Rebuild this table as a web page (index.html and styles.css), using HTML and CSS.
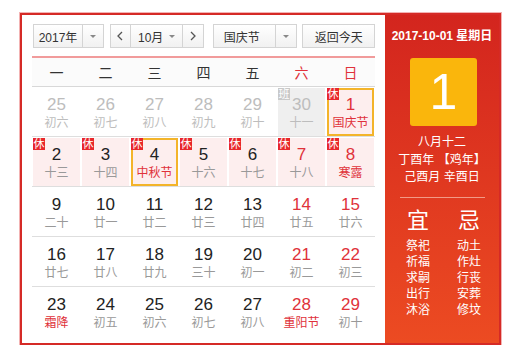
FILE: index.html
```html
<!DOCTYPE html>
<html lang="zh-CN">
<head>
<meta charset="utf-8">
<title>万年历</title>
<link rel="stylesheet" href="styles.css">
</head>
<body>
<div class="cal">
  <div class="main">
    <div class="controls">
      <div class="sel year"><span class="val">2017年</span><span class="arr"><i class="tri"></i></span></div>
      <div class="sel month">
        <span class="nav"><svg width="8" height="10" viewBox="0 0 8 10"><path d="M6 1 L2 5 L6 9" fill="none" stroke="#555" stroke-width="1.3"/></svg></span>
        <span class="val mval">10月<i class="tri"></i></span>
        <span class="nav"><svg width="8" height="10" viewBox="0 0 8 10"><path d="M2 1 L6 5 L2 9" fill="none" stroke="#555" stroke-width="1.3"/></svg></span>
      </div>
      <div class="sel hol"><span class="val">国庆节</span><span class="arr"><i class="tri"></i></span></div>
      <div class="btn">返回今天</div>
    </div>
    <div class="week">
      <span>一</span><span>二</span><span>三</span><span>四</span><span>五</span><span class="red">六</span><span class="red">日</span>
    </div>
    <div class="row">
      <div class="cell other"><b>25</b><em>初六</em></div>
      <div class="cell other"><b>26</b><em>初七</em></div>
      <div class="cell other"><b>27</b><em>初八</em></div>
      <div class="cell other"><b>28</b><em>初九</em></div>
      <div class="cell other"><b>29</b><em>初十</em></div>
      <div class="cell other work"><i class="badge gray">班</i><b>30</b><em>十一</em></div>
      <div class="cell rest sel-cell"><i class="badge">休</i><b class="red">1</b><em class="red">国庆节</em></div>
    </div>
    <div class="row">
      <div class="cell rest"><i class="badge">休</i><b>2</b><em>十三</em></div>
      <div class="cell rest"><i class="badge">休</i><b>3</b><em>十四</em></div>
      <div class="cell rest today"><i class="badge">休</i><b>4</b><em class="red">中秋节</em></div>
      <div class="cell rest"><i class="badge">休</i><b>5</b><em>十六</em></div>
      <div class="cell rest"><i class="badge">休</i><b>6</b><em>十七</em></div>
      <div class="cell rest"><i class="badge">休</i><b class="red">7</b><em>十八</em></div>
      <div class="cell rest"><i class="badge">休</i><b class="red">8</b><em class="red">寒露</em></div>
    </div>
    <div class="row">
      <div class="cell"><b>9</b><em>二十</em></div>
      <div class="cell"><b>10</b><em>廿一</em></div>
      <div class="cell"><b>11</b><em>廿二</em></div>
      <div class="cell"><b>12</b><em>廿三</em></div>
      <div class="cell"><b>13</b><em>廿四</em></div>
      <div class="cell"><b class="red">14</b><em>廿五</em></div>
      <div class="cell"><b class="red">15</b><em>廿六</em></div>
    </div>
    <div class="row">
      <div class="cell"><b>16</b><em>廿七</em></div>
      <div class="cell"><b>17</b><em>廿八</em></div>
      <div class="cell"><b>18</b><em>廿九</em></div>
      <div class="cell"><b>19</b><em>三十</em></div>
      <div class="cell"><b>20</b><em>初一</em></div>
      <div class="cell"><b class="red">21</b><em>初二</em></div>
      <div class="cell"><b class="red">22</b><em>初三</em></div>
    </div>
    <div class="row last">
      <div class="cell"><b>23</b><em class="red">霜降</em></div>
      <div class="cell"><b>24</b><em>初五</em></div>
      <div class="cell"><b>25</b><em>初六</em></div>
      <div class="cell"><b>26</b><em>初七</em></div>
      <div class="cell"><b>27</b><em>初八</em></div>
      <div class="cell"><b class="red">28</b><em class="red">重阳节</em></div>
      <div class="cell"><b class="red">29</b><em>初十</em></div>
    </div>
  </div>
  <div class="side">
    <div class="date">2017-10-01 星期日</div>
    <div class="big">1</div>
    <div class="lunar">
      <div>八月十二</div>
      <div>丁酉年 【鸡年】</div>
      <div>己酉月 辛酉日</div>
    </div>
    <div class="divider"></div>
    <div class="yiji">
      <div class="col">
        <div class="hd">宜</div>
        <div>祭祀</div><div>祈福</div><div>求嗣</div><div>出行</div><div>沐浴</div>
      </div>
      <div class="col">
        <div class="hd">忌</div>
        <div>动土</div><div>作灶</div><div>行丧</div><div>安葬</div><div>修坟</div>
      </div>
    </div>
  </div>
</div>
</body>
</html>
```
FILE: styles.css
```css
html, body {
  margin: 0;
  padding: 0;
  background: #fff;
}
body {
  padding: 13px 0 0 20px;
  font-family: "Liberation Sans", "Noto Sans CJK SC", sans-serif;
  color: #333;
}
.cal {
  display: flex;
  width: 477px;
  height: 328px;
  border: 2px solid #d52a26;
  box-shadow: 0 0 0 1px #f3b3b3;
}
.main {
  width: 343px;
  padding: 9px 10px 0 10px;
}
.controls {
  display: flex;
  height: 24px;
  padding-left: 1px;
  font-size: 12px;
}
.sel, .btn {
  display: flex;
  height: 22px;
  border: 1px solid #d4d4d4;
  background: linear-gradient(#fff, #f1f1f1);
  align-items: center;
}
.year { width: 69px; margin-right: 6px; }
.year .val { width: 48px; }
.month { width: 92px; margin-right: 9px; }
.hol { width: 83px; margin-right: 5px; }
.hol .val { width: 62px; justify-content: flex-start; padding-left: 10px; box-sizing: border-box; }
.val {
  display: flex;
  height: 100%;
  align-items: center;
  justify-content: center;
  border-right: 1px solid #d4d4d4;
}
.arr {
  flex: 1;
  display: flex;
  justify-content: center;
  align-items: center;
}
.tri {
  display: inline-block;
  width: 0;
  height: 0;
  border-left: 3px solid transparent;
  border-right: 3px solid transparent;
  border-top: 3px solid #888;
}
.nav {
  width: 20px;
  height: 100%;
  display: flex;
  align-items: center;
  justify-content: center;
}
.mval {
  width: 52px;
  border-left: 1px solid #d4d4d4;
  gap: 6px;
}
.btn {
  width: 71px;
  justify-content: center;
  font-size: 12px;
}
.week {
  display: grid;
  grid-template-columns: repeat(7, 49px);
  height: 28px;
  margin-top: 8px;
  border-top: 2px solid #f19b9b;
  border-bottom: 1px solid #d8d8d8;
  background: #fbfbfb;
  font-size: 14px;
  align-items: center;
  justify-items: center;
}
.red { color: #e0323a !important; }
.row {
  display: grid;
  grid-template-columns: repeat(7, 49px);
  height: 48px;
  border-bottom: 1px solid #dedede;
  padding-top: 1px;
}
.row.last { border-bottom: none; }
.cell {
  position: relative;
  margin: 0 1px;
  display: flex;
  flex-direction: column;
  align-items: center;
  box-sizing: border-box;
  padding-top: 7px;
}
.cell b {
  font-weight: normal;
  font-size: 17px;
  line-height: 20px;
  color: #222;
}
.cell em {
  font-style: normal;
  font-size: 12px;
  line-height: 16px;
  color: #999;
}
.cell.other b, .cell.other em { color: #bdbdbd; }
.cell.work { background: #efefef; }
.cell.rest { background: #fdeeee; }
.cell.sel-cell, .cell.today {
  border: 2px solid #f3b42a;
  padding-top: 5px;
}
.badge {
  position: absolute;
  left: 0;
  top: 0;
  width: 12px;
  height: 12px;
  background: #e8262b;
  color: #fff;
  font-style: normal;
  font-size: 11px;
  line-height: 12px;
  text-align: center;
}
.sel-cell .badge, .today .badge { left: -2px; top: -2px; }
.badge.gray { background: #c9c9c9; }
.side {
  width: 114px;
  background: linear-gradient(#d3251e, #ec4b22);
  color: #fff;
  display: flex;
  flex-direction: column;
  align-items: center;
  padding-top: 14px;
}
.date {
  font-size: 12px;
  font-weight: bold;
  line-height: 14px;
}
.big {
  width: 67px;
  height: 68px;
  margin-top: 15px;
  margin-left: 3px;
  background: #fab60c;
  border-radius: 3px;
  font-size: 50px;
  line-height: 68px;
  text-align: center;
}
.lunar {
  margin-top: 8px;
  font-size: 12px;
  line-height: 17.5px;
  text-align: center;
}
.divider {
  width: 85px;
  height: 1px;
  background: #f29a86;
  margin-top: 10px;
}
.yiji {
  display: flex;
  gap: 27px;
  margin-top: 11px;
  margin-left: 3px;
  font-size: 12px;
  line-height: 16px;
}
.col {
  display: flex;
  flex-direction: column;
  align-items: center;
}
.col .hd {
  font-size: 22px;
  line-height: 24px;
  margin-bottom: 5px;
}
```
